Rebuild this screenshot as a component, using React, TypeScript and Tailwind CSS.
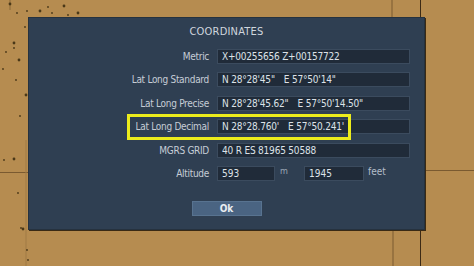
import * as React from "react";

const ROWS = [
  { label: "Metric", value: ["X+00255656 Z+00157722"] },
  { label: "Lat Long Standard", value: ["N 28°28'45\"", "E 57°50'14\""] },
  { label: "Lat Long Precise", value: ["N 28°28'45.62\"", "E 57°50'14.50\""] },
  { label: "Lat Long Decimal", value: ["N 28°28.760'", "E 57°50.241'"] },
  { label: "MGRS GRID", value: ["40 R ES 81965 50588"] },
];

function MapBackdrop() {
  // terrain map behind the dialog: grid lines + scattered dots
  const dots = [
    [10, 4], [17, 13], [27, 11], [40, 11], [52, 13], [68, 15], [78, 13],
    [6, 52], [14, 48], [19, 60], [3, 69], [16, 80], [26, 95], [20, 116],
    [4, 160], [14, 159], [18, 193], [21, 228], [23, 229], [27, 250], [28, 260],
    [14, 43], [25, 27], [48, 7], [64, 6],
  ];
  return (
    <svg className="absolute inset-0" width="474" height="266" viewBox="0 0 474 266">
      <line x1="392" y1="0" x2="392" y2="17" stroke="#7a5a30" strokeWidth="1" />
      <line x1="420.5" y1="0" x2="420.5" y2="17" stroke="#3c2a15" strokeWidth="1" />
      <line x1="393" y1="230" x2="393" y2="266" stroke="#7a5a30" strokeWidth="1" />
      <line x1="420.5" y1="230" x2="420.5" y2="266" stroke="#3c2a15" strokeWidth="1" />
      <line x1="425" y1="170.5" x2="474" y2="170.5" stroke="#7a5a30" strokeWidth="1" />
      <line x1="0" y1="172.5" x2="28" y2="172.5" stroke="#7a5a30" strokeWidth="1" />
      <line x1="10" y1="0" x2="10" y2="10" stroke="#8a6838" strokeWidth="1" />
      <line x1="26" y1="140" x2="26" y2="266" stroke="#a07a44" strokeWidth="1" />
      {dots.map(([x, y], i) => (
        <circle key={i} cx={x} cy={y} r={i % 3 === 0 ? 1.4 : 0.9} fill="#4a3818" />
      ))}
    </svg>
  );
}

export default function App() {
  return (
    <div className="relative w-[474px] h-[266px] overflow-hidden bg-[#b68c50] pt-[17px] pl-[28px] font-['DejaVu_Sans_Condensed','DejaVu_Sans',sans-serif]">
      <MapBackdrop />

      <div className="relative w-[397px] h-[213px] bg-[#2f3f52] border border-[#26323f] shadow-[1px_1px_0_#3a2a14] flex flex-col">
        <div className="h-[30px] pt-[7px] text-center text-[11px] leading-[14px] text-[#cfd6de] tracking-[0.2px]">
          COORDINATES
        </div>

        <div className="flex flex-col gap-[8.4px] pt-[1px]">
          {ROWS.map((row) => (
            <div key={row.label} className="flex items-center h-[15px]">
              <div className="w-[180px] text-right text-[10px] leading-[15px] text-[#c6cdd6] tracking-[-0.3px]">
                {row.label}
              </div>
              <div className="ml-[8px] w-[193px] h-[15px] bg-[#202b39] border border-[#3b4b5e] pl-[4px] flex gap-[9px] text-[10px] leading-[13px] text-[#dde2e8] tracking-[-0.2px] whitespace-pre">
                {row.value.map((v) => (
                  <span key={v}>{v}</span>
                ))}
              </div>
            </div>
          ))}

          <div className="flex items-center h-[15px]">
            <div className="w-[180px] text-right text-[10px] leading-[15px] text-[#c6cdd6] tracking-[-0.3px]">
              Altitude
            </div>
            <div className="ml-[8px] w-[58px] h-[15px] bg-[#202b39] border border-[#3b4b5e] pl-[4px] text-[10px] leading-[13px] text-[#dde2e8]">
              593
            </div>
            <div className="w-[29px] pl-[5px] text-[9px] leading-[13px] text-[#9aa6b4] -mt-[3px]">m</div>
            <div className="w-[60px] h-[15px] bg-[#202b39] border border-[#3b4b5e] pl-[4px] text-[10px] leading-[13px] text-[#dde2e8]">
              1945
            </div>
            <div className="pl-[4px] text-[10px] leading-[13px] text-[#b4bec9] -mt-[3px]">feet</div>
          </div>
        </div>

        <div className="flex justify-center mt-[20px]">
          <button className="w-[70px] h-[15px] bg-[#4a6482] border border-[#587390] text-[10px] leading-[13px] font-bold text-[#e8ecf0]">
            Ok
          </button>
        </div>

        {/* highlight annotation */}
        <div className="absolute left-[98px] top-[96px] w-[224px] h-[26px] border-[3px] border-[#ecec1c]" />
      </div>
    </div>
  );
}
